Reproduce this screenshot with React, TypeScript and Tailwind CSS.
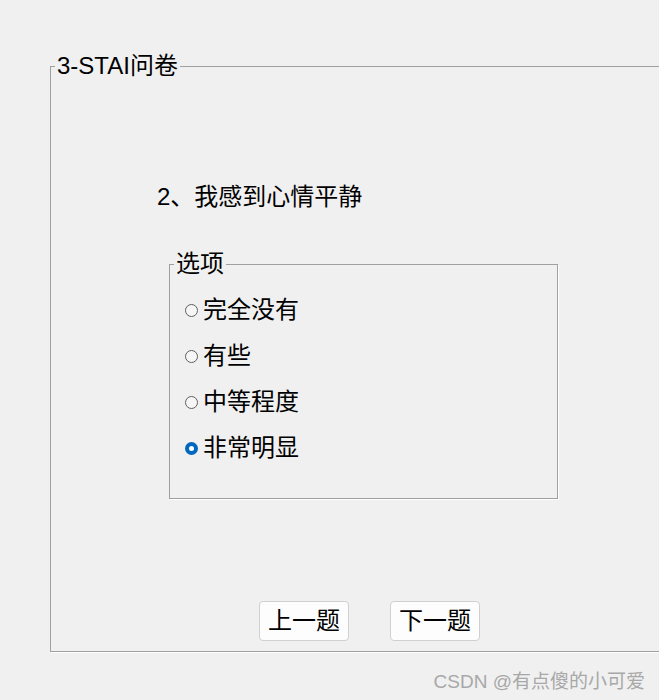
import React, { useState } from "react";

const font = "font-['Liberation_Sans','Noto_Sans_CJK_SC',sans-serif]";

const options = ["完全没有", "有些", "中等程度", "非常明显"];

function Radio({ checked }: { checked: boolean }) {
  if (checked) {
    return (
      <span className="flex h-[13px] w-[13px] shrink-0 items-center justify-center rounded-full bg-[#0067c0]">
        <span className="h-[5px] w-[5px] rounded-full bg-white" />
      </span>
    );
  }
  return (
    <span className="h-[13px] w-[13px] shrink-0 rounded-full border border-[#5f5f5f] bg-[#f6f6f6]" />
  );
}

export default function App() {
  const [choice, setChoice] = useState(3);

  return (
    <div
      className={`h-[700px] w-[659px] overflow-hidden bg-[#f0f0f0] text-black ${font}`}
    >
      <fieldset className="ml-[50px] mt-[53px] h-[599px] w-[700px] border border-[#a0a0a0] shadow-[1px_1px_0_#fff]">
        <legend className="ml-[4px] px-[2px] text-[24px] leading-[26px]">
          3-STAI问卷
        </legend>

        <p className="ml-[106px] mt-[105px] text-[24px] leading-[26px]">
          2、我感到心情平静
        </p>

        <fieldset className="ml-[118px] mt-[41px] h-[248px] w-[389px] border border-[#a0a0a0] shadow-[1px_1px_0_#fff]">
          <legend className="ml-[4px] px-[2px] text-[24px] leading-[26px]">
            选项
          </legend>
          <div className="ml-[15px] mt-[20px] flex flex-col gap-[20px]">
            {options.map((label, i) => (
              <label
                key={label}
                onClick={() => setChoice(i)}
                className="flex h-[26px] cursor-default items-center gap-[5px] text-[24px] leading-[26px]"
              >
                <Radio checked={choice === i} />
                <span>{label}</span>
              </label>
            ))}
          </div>
        </fieldset>

        <div className="ml-[208px] mt-[102px] flex gap-[41px]">
          <button className="h-[40px] w-[90px] rounded-[4px] border border-[#d0d0d0] bg-[#fdfdfd] text-[24px] leading-[26px]">
            上一题
          </button>
          <button className="h-[40px] w-[90px] rounded-[4px] border border-[#d0d0d0] bg-[#fdfdfd] text-[24px] leading-[26px]">
            下一题
          </button>
        </div>
      </fieldset>

      <p className="mt-[18px] pr-[14px] text-right text-[19px] leading-[24px] text-[#a8a8a8]">
        CSDN @有点傻的小可爱
      </p>
    </div>
  );
}
